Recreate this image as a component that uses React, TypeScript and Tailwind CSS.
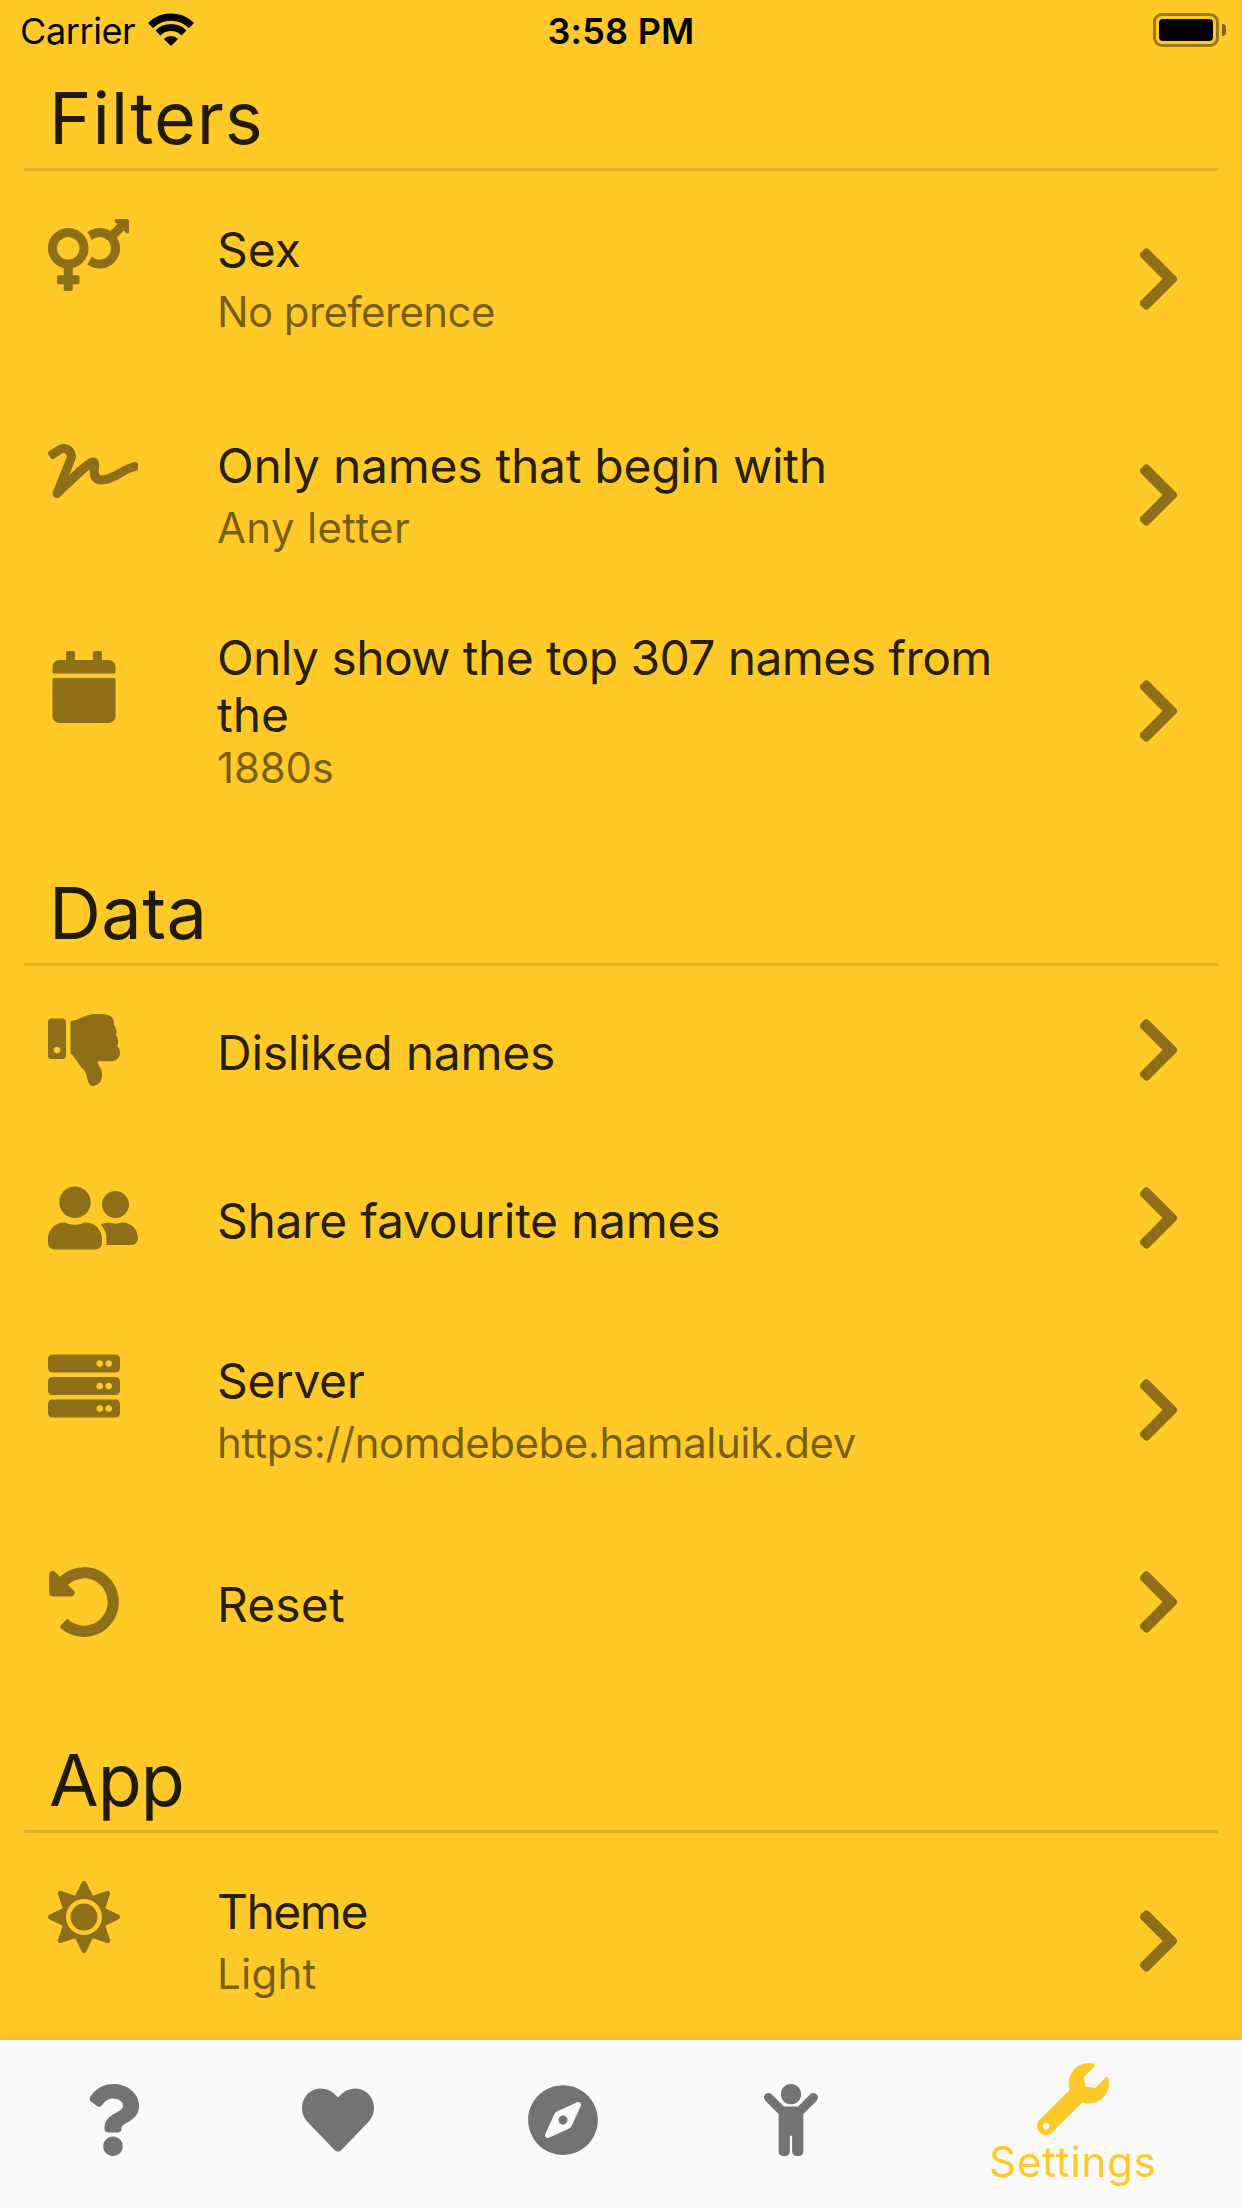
import type { IconType } from "react-icons";
import {
  FaCalendar,
  FaChevronRight,
  FaChild,
  FaCompass,
  FaHeart,
  FaQuestion,
  FaServer,
  FaSignature,
  FaSun,
  FaThumbsDown,
  FaUndoAlt,
  FaUserFriends,
  FaVenusMars,
  FaWrench,
} from "react-icons/fa";

type Line = { text: string; tracking: string };

type RowProps = {
  icon: IconType;
  iconWidth?: string;
  title: Line[];
  subtitle?: Line;
};

function StatusBar() {
  return (
    <header className="relative z-10 grid h-[60px] grid-cols-3 items-start px-5 text-[36px] leading-[44px] text-black">
      <div className="flex">
        <span className="mt-[9px] tracking-[-0.4px]">Carrier</span>
        <svg viewBox="0 0 46 34" className="mt-[13px] ml-[13px] h-[34px] w-[46px]" fill="none" stroke="currentColor">
          <path d="M2.6 12.6A28.9 28.9 0 0 1 43.4 12.6" strokeWidth="7.4" />
          <path d="M10 20A18.4 18.4 0 0 1 36 20" strokeWidth="7" />
          <path d="M23 33L15.9 25.9A10 10 0 0 1 30.1 25.9Z" fill="currentColor" stroke="none" />
        </svg>
      </div>
      <div className="mt-[9px] text-center font-semibold tracking-[0.2px]">3:58 PM</div>
      <div className="mt-[13px] -mr-1 flex items-center justify-end gap-[3px]">
        <div className="h-[34px] w-[66px] rounded-[9px] border-[3px] border-black/40 p-[3px]">
          <div className="h-full w-full rounded-[4px] bg-black" />
        </div>
        <div className="h-[12px] w-[4px] rounded-r-full bg-black/50" />
      </div>
    </header>
  );
}

function Heading({ text, tracking }: Line) {
  return (
    <div className="mx-6 flex h-[147px] items-end border-b-[3px] border-black/12 pb-[7px] pl-[25px]">
      <h2 className={`text-[72px] leading-[87px] ${tracking}`}>{text}</h2>
    </div>
  );
}

function Row({ icon: Icon, iconWidth = "w-[72px]", title, subtitle }: RowProps) {
  const height = subtitle ? "h-[216px]" : "h-[168px]";
  const multiline = title.length > 1;
  const offset = multiline ? "pt-[26px]" : subtitle ? "pt-[50px]" : "pt-[58px]";
  return (
    <div className={`flex ${height} pr-[61px] pl-12`}>
      <div className="w-[169px] pt-12">
        <Icon className={`h-[72px] ${iconWidth} text-black/45`} />
      </div>
      <div className={`flex-1 ${offset}`}>
        {title.map((line) => (
          <div key={line.text} className={`text-[48px] leading-[57px] whitespace-nowrap ${line.tracking}`}>
            {line.text}
          </div>
        ))}
        {subtitle && (
          <div
            className={`text-[42px] leading-[50px] whitespace-nowrap text-black/54 ${multiline ? "mt-0" : "mt-[9px]"} ${subtitle.tracking}`}
          >
            {subtitle.text}
          </div>
        )}
      </div>
      <FaChevronRight className="h-[72px] w-[45px] self-center text-black/45" />
    </div>
  );
}

function NavItem({ icon: Icon }: { icon: IconType }) {
  return (
    <button className="flex w-[225px] items-center justify-center pb-[8px] text-[#737373]">
      <Icon className="size-[72px]" />
    </button>
  );
}

export default function App() {
  return (
    <div className="flex h-[2208px] w-[1242px] flex-col overflow-hidden bg-[#ffca28] font-['Inter',sans-serif] text-black/87">
      <StatusBar />
      <main className="-mt-9 h-[2016px] overflow-hidden">
        <Heading text="Filters" tracking="tracking-[0.9px]" />
        <Row
          icon={FaVenusMars}
          iconWidth="w-[81px]"
          title={[{ text: "Sex", tracking: "tracking-normal" }]}
          subtitle={{ text: "No preference", tracking: "tracking-[-0.6px]" }}
        />
        <Row
          icon={FaSignature}
          iconWidth="w-[90px]"
          title={[{ text: "Only names that begin with", tracking: "tracking-[-0.28px]" }]}
          subtitle={{ text: "Any letter", tracking: "tracking-[0.35px]" }}
        />
        <Row
          icon={FaCalendar}
          title={[
            { text: "Only show the top 307 names from", tracking: "tracking-[-0.6px]" },
            { text: "the", tracking: "tracking-normal" },
          ]}
          subtitle={{ text: "1880s", tracking: "tracking-[-0.2px]" }}
        />
        <Heading text="Data" tracking="tracking-[0.4px]" />
        <Row icon={FaThumbsDown} title={[{ text: "Disliked names", tracking: "tracking-[-0.25px]" }]} />
        <Row
          icon={FaUserFriends}
          iconWidth="w-[90px]"
          title={[{ text: "Share favourite names", tracking: "tracking-[-0.28px]" }]}
        />
        <Row
          icon={FaServer}
          title={[{ text: "Server", tracking: "tracking-[-0.4px]" }]}
          subtitle={{ text: "https://nomdebebe.hamaluik.dev", tracking: "tracking-[-0.48px]" }}
        />
        <Row icon={FaUndoAlt} title={[{ text: "Reset", tracking: "tracking-[0.1px]" }]} />
        <Heading text="App" tracking="tracking-[-1px]" />
        <Row
          icon={FaSun}
          title={[{ text: "Theme", tracking: "tracking-[-1.5px]" }]}
          subtitle={{ text: "Light", tracking: "tracking-[0.25px]" }}
        />
      </main>
      <nav className="relative flex h-[168px] bg-[#fafafa] shadow-[0_0_12px_rgba(0,0,0,0.1)]">
        <NavItem icon={FaQuestion} />
        <NavItem icon={FaHeart} />
        <NavItem icon={FaCompass} />
        <div className="flex pl-[3px]">
          <NavItem icon={FaChild} />
        </div>
        <button className="flex flex-1 flex-col items-center pt-[23px] pl-px text-[#ffca28]">
          <FaWrench className="size-[72px]" />
          <span className="mt-[2px] text-[42px] leading-[50px] tracking-[0.84px]">Settings</span>
        </button>
      </nav>
    </div>
  );
}
